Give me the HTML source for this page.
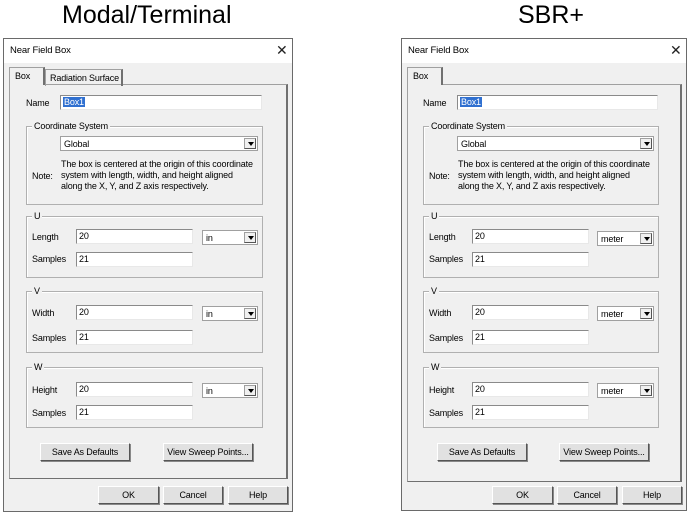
<!DOCTYPE html>
<html><head><meta charset="utf-8"><style>
*{box-sizing:border-box;margin:0;padding:0}
body{width:691px;height:518px;background:#fff;position:relative;overflow:hidden;font-family:"Liberation Sans",sans-serif;font-size:9px;letter-spacing:-0.15px;color:#000}
div,span{position:absolute}
.h{font-size:25px;top:1px;white-space:nowrap;letter-spacing:0}
.dlg{background:#f0f0f0;border:1px solid #6a6a6a}
.tb{background:#fff;left:0;top:0;right:0;height:24px}
.tt{font-size:9.5px;left:6px;top:6px}
.x{font-size:14px;top:3px;color:#222}
.panel{border:1px solid #a0a0a0;border-right:2px solid #707070;border-bottom:1px solid #707070;background:#f0f0f0}
.tab{border:1px solid #a0a0a0;border-bottom:none;border-right:2px solid #707070;height:17px;padding:3px 4px;white-space:nowrap}
.in{background:#fff;border-top:1px solid #8a8a8a;border-left:1px solid #8a8a8a;border-right:1px solid #e8e8e8;border-bottom:1px solid #e8e8e8;height:15px;padding:1px 2px;white-space:nowrap}
.grp{border:1px solid #b0b0b0;box-shadow:inset 1px 1px 0 #fff}
.gl{background:#f0f0f0;top:-6px;left:5px;padding:0 2px}
.cb{background:#fff;border:1px solid #a0a0a0;height:15px;padding:2px 3px;white-space:nowrap}
.ar{right:1px;top:1px;width:12px;height:11px;background:#f0f0f0;border:1px solid #a0a0a0;border-right-color:#555;border-bottom-color:#555}
.ar:after{content:"";position:absolute;left:3px;top:3px;border-left:3px solid transparent;border-right:3px solid transparent;border-top:4px solid #000}
.bt{background:#e1e1e1;border:1px solid #fff;border-right-color:#555;border-bottom-color:#555;box-shadow:1px 1px 0 #888;text-align:center;height:18px;line-height:16px;white-space:nowrap}
.sel{background:#3070d0;color:#fff;padding:0 1px}
.l{white-space:nowrap}
</style></head><body>
<div class="h" style="left:62px">Modal/Terminal</div>
<div class="h" style="left:518px">SBR+</div>

<!-- LEFT -->
<div class="dlg" style="left:3px;top:38px;width:290px;height:474px">
 <div class="tb"><span class="tt">Near Field Box</span><span class="x" style="left:272px">✕</span></div>
</div>
<div class="panel" style="left:9px;top:84px;width:279px;height:395px"></div>
<div class="tab" style="left:9px;top:67px;width:36px;background:#f0f0f0;height:18px;padding-left:5px">Box</div>
<div class="tab" style="left:45px;top:69px;width:78px">Radiation Surface</div>
<span class="l" style="left:26px;top:98px">Name</span>
<div class="in" style="left:60px;top:95px;width:202px"><span class="sel" style="position:static">Box1</span></div>
<div class="grp" style="left:26px;top:126px;width:237px;height:79px"><span class="gl">Coordinate System</span></div>
<div class="cb" style="left:60px;top:136px;width:198px">Global<span class="ar"></span></div>
<span class="l" style="left:61px;top:159px;line-height:11px">The box is centered at the origin of this coordinate<br>system with length, width, and height aligned<br>along the X, Y, and Z axis respectively.</span>
<span class="l" style="left:32px;top:171px">Note:</span>
<div class="grp" style="left:26px;top:216px;width:237px;height:62px"><span class="gl">U</span></div>
<span class="l" style="left:32px;top:232px">Length</span><div class="in" style="left:76px;top:229px;width:117px">20</div>
<div class="cb" style="left:202px;top:230px;width:56px">in<span class="ar"></span></div>
<span class="l" style="left:32px;top:254px">Samples</span><div class="in" style="left:76px;top:252px;width:117px">21</div>
<div class="grp" style="left:26px;top:291px;width:237px;height:62px"><span class="gl">V</span></div>
<span class="l" style="left:32px;top:308px">Width</span><div class="in" style="left:76px;top:305px;width:117px">20</div>
<div class="cb" style="left:202px;top:306px;width:56px">in<span class="ar"></span></div>
<span class="l" style="left:32px;top:333px">Samples</span><div class="in" style="left:76px;top:330px;width:117px">21</div>
<div class="grp" style="left:26px;top:367px;width:237px;height:61px"><span class="gl">W</span></div>
<span class="l" style="left:32px;top:385px">Height</span><div class="in" style="left:76px;top:382px;width:117px">20</div>
<div class="cb" style="left:202px;top:383px;width:56px">in<span class="ar"></span></div>
<span class="l" style="left:32px;top:408px">Samples</span><div class="in" style="left:76px;top:405px;width:117px">21</div>
<div class="bt" style="left:40px;top:443px;width:90px">Save As Defaults</div>
<div class="bt" style="left:163px;top:443px;width:90px">View Sweep Points...</div>
<div class="bt" style="left:98px;top:486px;width:61px">OK</div>
<div class="bt" style="left:163px;top:486px;width:60px">Cancel</div>
<div class="bt" style="left:228px;top:486px;width:60px">Help</div>

<!-- RIGHT -->
<div class="dlg" style="left:401px;top:38px;width:286px;height:473px">
 <div class="tb"><span class="tt">Near Field Box</span><span class="x" style="left:268px">✕</span></div>
</div>
<div class="panel" style="left:407px;top:84px;width:275px;height:398px"></div>
<div class="tab" style="left:407px;top:67px;width:36px;background:#f0f0f0;height:18px;padding-left:5px">Box</div>
<span class="l" style="left:423px;top:98px">Name</span>
<div class="in" style="left:457px;top:95px;width:201px"><span class="sel" style="position:static">Box1</span></div>
<div class="grp" style="left:423px;top:126px;width:236px;height:79px"><span class="gl">Coordinate System</span></div>
<div class="cb" style="left:457px;top:136px;width:197px">Global<span class="ar"></span></div>
<span class="l" style="left:458px;top:159px;line-height:11px">The box is centered at the origin of this coordinate<br>system with length, width, and height aligned<br>along the X, Y, and Z axis respectively.</span>
<span class="l" style="left:429px;top:171px">Note:</span>
<div class="grp" style="left:423px;top:216px;width:236px;height:62px"><span class="gl">U</span></div>
<span class="l" style="left:429px;top:232px">Length</span><div class="in" style="left:472px;top:229px;width:117px">20</div>
<div class="cb" style="left:597px;top:231px;width:57px">meter<span class="ar"></span></div>
<span class="l" style="left:429px;top:254px">Samples</span><div class="in" style="left:472px;top:252px;width:117px">21</div>
<div class="grp" style="left:423px;top:291px;width:236px;height:62px"><span class="gl">V</span></div>
<span class="l" style="left:429px;top:308px">Width</span><div class="in" style="left:472px;top:305px;width:117px">20</div>
<div class="cb" style="left:597px;top:306px;width:57px">meter<span class="ar"></span></div>
<span class="l" style="left:429px;top:333px">Samples</span><div class="in" style="left:472px;top:330px;width:117px">21</div>
<div class="grp" style="left:423px;top:367px;width:236px;height:61px"><span class="gl">W</span></div>
<span class="l" style="left:429px;top:385px">Height</span><div class="in" style="left:472px;top:382px;width:117px">20</div>
<div class="cb" style="left:597px;top:383px;width:57px">meter<span class="ar"></span></div>
<span class="l" style="left:429px;top:408px">Samples</span><div class="in" style="left:472px;top:405px;width:117px">21</div>
<div class="bt" style="left:437px;top:443px;width:90px">Save As Defaults</div>
<div class="bt" style="left:559px;top:443px;width:90px">View Sweep Points...</div>
<div class="bt" style="left:492px;top:486px;width:61px">OK</div>
<div class="bt" style="left:557px;top:486px;width:60px">Cancel</div>
<div class="bt" style="left:622px;top:486px;width:60px">Help</div>
</body></html>
